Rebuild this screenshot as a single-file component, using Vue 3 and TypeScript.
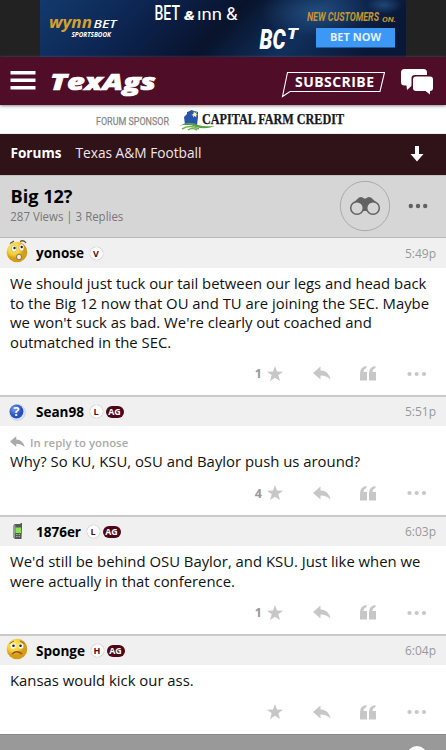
<script setup lang="ts">
interface Post {
  id: number
  name: string
  avatar: 'worried' | 'question' | 'phone' | 'sad'
  badge: string
  ag: boolean
  time: string
  replyTo?: string
  lines: string[]
  stars?: number
  nameWidth: number
}

const posts: Post[] = [
  {
    id: 1, name: 'yonose', avatar: 'worried', badge: 'V', ag: false, time: '5:49p', stars: 1, nameWidth: 49,
    lines: [
      'We should just tuck our tail between our legs and head back',
      'to the Big 12 now that OU and TU are joining the SEC. Maybe',
      "we won't suck as bad. We're clearly out coached and",
      'outmatched in the SEC.',
    ],
  },
  {
    id: 2, name: 'Sean98', avatar: 'question', badge: 'L', ag: true, time: '5:51p', stars: 4, nameWidth: 49,
    replyTo: 'yonose', lines: ['Why? So KU, KSU, oSU and Baylor push us around?'],
  },
  {
    id: 3, name: '1876er', avatar: 'phone', badge: 'L', ag: true, time: '6:03p', stars: 1, nameWidth: 46,
    lines: ["We'd still be behind OSU Baylor, and KSU. Just like when we", 'were actually in that conference.'],
  },
  {
    id: 4, name: 'Sponge', avatar: 'sad', badge: 'H', ag: true, time: '6:04p', nameWidth: 50,
    lines: ['Kansas would kick our ass.'],
  },
]
</script>

<template>
  <main class="page">
    <div class="ad">
      <svg class="banner" width="366" height="57" viewBox="40 0 366 57">
        <defs>
          <linearGradient id="navy" x1="0" x2="1" y1="0" y2=".15">
            <stop offset="0" stop-color="#123a6d" /><stop offset=".3" stop-color="#0c2450" />
            <stop offset=".56" stop-color="#09132c" /><stop offset=".78" stop-color="#10305c" /><stop offset="1" stop-color="#0a1838" />
          </linearGradient>
          <radialGradient id="glow"><stop offset="0" stop-color="#2b5c91" stop-opacity=".65" /><stop offset="1" stop-color="#2b5c91" stop-opacity="0" /></radialGradient>
        </defs>
        <rect x="40" width="366" height="57" fill="url(#navy)" />
        <ellipse cx="315" cy="12" rx="55" ry="24" fill="url(#glow)" />
        <ellipse cx="384" cy="5" rx="18" ry="9" fill="url(#glow)" />
        <g font-family="Open Sans, sans-serif" font-style="italic" font-weight="700">
          <text x="49" y="28" font-size="16.500" fill="#d6a22e" textLength="43" lengthAdjust="spacingAndGlyphs">wynn</text>
          <text x="93.500" y="28" font-size="11.500" fill="#fff" font-weight="600" textLength="23" lengthAdjust="spacingAndGlyphs">BET</text>
          <text x="71.500" y="36.500" font-size="7" fill="#fff" textLength="39.500" lengthAdjust="spacingAndGlyphs">SPORTSBOOK</text>
        </g>
        <g font-family="Roboto, sans-serif" font-style="italic" font-weight="700" fill="#c79632">
          <text x="307" y="21.300" font-size="12.500" textLength="72" lengthAdjust="spacingAndGlyphs">NEW CUSTOMERS</text>
          <text x="382" y="21.500" font-size="8" textLength="14" lengthAdjust="spacingAndGlyphs">ON.</text>
        </g>
        <g font-family="Roboto, sans-serif" fill="#fff">
          <text x="154.500" y="20" font-size="20" font-weight="500" textLength="25.500" lengthAdjust="spacingAndGlyphs">BET</text>
          <text x="184" y="20" font-size="12" font-weight="900" font-style="italic" textLength="11" lengthAdjust="spacingAndGlyphs">&amp;</text>
          <text x="197" y="20" font-size="17" textLength="25" lengthAdjust="spacingAndGlyphs">ınn</text>
          <text x="226" y="20" font-size="19" textLength="11.500" lengthAdjust="spacingAndGlyphs">&amp;</text>
        </g>
        <g font-family="Roboto, sans-serif" font-weight="900" font-style="italic" fill="#fff">
          <text x="259.500" y="48.500" font-size="27" textLength="26" lengthAdjust="spacingAndGlyphs">BC</text>
          <text x="287" y="38.800" font-size="14" textLength="11" lengthAdjust="spacingAndGlyphs">T</text>
        </g>
        <rect x="316" y="28" width="79" height="19.500" fill="#3d98f5" />
        <text x="330" y="41.300" font-family="Open Sans, sans-serif" font-size="10.800" font-weight="700" fill="#e2f0ff" textLength="51" lengthAdjust="spacingAndGlyphs">BET NOW</text>
      </svg>
    </div>

    <header class="top">
      <svg class="burger" width="26" height="20" viewBox="0 0 26 20" fill="#fff"><path d="M.5 0h25v3.500h-25zM.5 7.500h25V11h-25zM.5 15h25v3.500h-25z" /></svg>
      <svg class="logo" width="120" height="34" viewBox="0 -6 120 34">
        <text x="2" y="20" font-family="Open Sans, sans-serif" font-size="23" font-weight="800" font-style="italic" fill="#fff" stroke="#fff" stroke-width=".7" textLength="106" lengthAdjust="spacingAndGlyphs">TexAgs</text>
      </svg>
      <svg class="subscribe" width="104" height="28" viewBox="0 0 104 28">
        <path d="M6.500 2.500h97l-4.500 19H9l-7.500 5z" fill="none" stroke="#fff" stroke-width="1.100" />
        <text x="14" y="16.500" font-family="Open Sans, sans-serif" font-size="14" font-weight="700" fill="#fff" textLength="79">SUBSCRIBE</text>
      </svg>
      <svg class="chat" width="34" height="28" viewBox="0 0 34 28">
        <path d="M4.500 1h19q3.500 0 3.500 3.500V14q0 3.500-3.500 3.500H12l-5 4.500-.5-4.500h-2Q1 17.500 1 14V4.500Q1 1 4.500 1z" fill="#fff" />
        <path d="M15 7h16q3 0 3 3v11q0 3-3 3l1.500 4.500-7-4.500H15q-3.500 0-3.500-3V10q0-3 3.500-3z" fill="#500d27" />
        <path d="M16 8.500h14q3 0 3 3V20q0 3-3 3v3.500L25.500 23H16q-3 0-3-3v-8.500q0-3 3-3z" fill="#fff" />
      </svg>
    </header>

    <div class="sponsor">
      <svg width="446" height="28" viewBox="0 105 446 28">
        <text x="96" y="125" font-family="Roboto, sans-serif" font-size="11.500" fill="#858585" stroke="#858585" stroke-width=".25" textLength="73" lengthAdjust="spacingAndGlyphs">FORUM SPONSOR</text>
        <path d="m184 117 7-7 7 2v5l-1 8h-12z" fill="#2855a8" /><path d="m187 112 3-1v3h-3z" fill="#2855a8" />
        <path d="m194 111 1 2 2-1-1 2 2 1-2 .5.5 2-2-1.500-1.500 1.500.3-2-2-.5 2-1z" fill="#fff5a5" />
        <path d="M179 126q10-6 19-1 6 2 17 1-10 4-19 1-8-4-17-1z" fill="#5ba043" />
        <path d="M182 129q8-5 17 0M188 130q4-3 9 0" fill="none" stroke="#75ad52" stroke-width="1.500" />
        <text x="202" y="124.300" font-family="Liberation Serif, serif" font-size="14.500" font-weight="700" fill="#17191c" stroke="#17191c" stroke-width=".25" textLength="142" lengthAdjust="spacingAndGlyphs">CAPITAL FARM CREDIT</text>
      </svg>
    </div>

    <nav class="crumbs">
      <svg class="crumbtext" width="210" height="41" viewBox="0 0 210 41" font-family="Open Sans, sans-serif" font-size="14" fill="#fff">
        <text x="10.500" y="24" font-weight="700" textLength="51" lengthAdjust="spacingAndGlyphs">Forums</text>
        <text x="75.500" y="24" fill="#eee6e7" textLength="126" lengthAdjust="spacingAndGlyphs">Texas A&amp;M Football</text>
      </svg>
      <svg class="down" width="14" height="16" viewBox="0 0 14 16"><path d="M5 0h4v8h4.500L7 15.500.5 8H5z" fill="#fff" /></svg>
    </nav>

    <section class="topic">
      <svg class="topictext" width="200" height="60" viewBox="0 0 200 60" font-family="Open Sans, sans-serif">
        <text x="10.500" y="26.500" font-size="18" font-weight="700" textLength="62" lengthAdjust="spacingAndGlyphs">Big 12?</text>
        <text x="10.300" y="45" font-size="12" fill="#777" textLength="113" lengthAdjust="spacingAndGlyphs">287 Views | 3 Replies</text>
      </svg>
      <div class="topic-actions">
        <svg width="52" height="52" viewBox="0 0 52 52">
          <circle cx="26" cy="26" r="24.700" fill="none" stroke="#aaa" />
          <path d="M12 25 20 17.500q3-1.500 5 1h2q2-2.500 5-1L40 25 29 31h-6z" fill="#626262" />
          <circle cx="18" cy="28" r="6.300" fill="#d6d6d6" stroke="#626262" stroke-width="1.500" />
          <circle cx="34" cy="28" r="6.300" fill="#d6d6d6" stroke="#626262" stroke-width="1.500" />
        </svg>
        <svg class="more" width="20" height="6" viewBox="0 0 20 6" fill="#626262"><circle cx="2.800" cy="3" r="2.200" /><circle cx="10" cy="3" r="2.200" /><circle cx="17.200" cy="3" r="2.200" /></svg>
      </div>
    </section>

    <article v-for="post in posts" :key="post.id" :class="['post', 'post-' + post.id]">
      <header class="author">
        <div class="avatar">
          <svg width="24" height="24" viewBox="0 0 24 24">
            <defs>
              <radialGradient :id="'yellow' + post.id" cx=".35" cy=".3"><stop offset="0" stop-color="#fff28a" /><stop offset=".65" stop-color="#f4cd38" /><stop offset="1" stop-color="#d39d18" /></radialGradient>
              <radialGradient :id="'blue' + post.id" cx=".35" cy=".3"><stop offset="0" stop-color="#769ef5" /><stop offset="1" stop-color="#2450c4" /></radialGradient>
            </defs>
            <g v-if="post.avatar === 'worried'">
              <circle cx="12" cy="13" r="10.300" :fill="`url(#yellow${post.id})`" />
              <ellipse cx="9" cy="9.500" rx="2.600" ry="3.600" fill="#fffbed" stroke="#a9934b" stroke-width=".5" /><ellipse cx="16.500" cy="8.500" rx="2.600" ry="3.600" fill="#fffbed" stroke="#a9934b" stroke-width=".5" />
              <circle cx="9.500" cy="9" r="1.200" fill="#272018" /><circle cx="16.700" cy="8" r="1.200" fill="#272018" />
              <ellipse cx="14" cy="18" rx="2.500" ry="2.800" fill="#eee" stroke="#8b7445" />
              <path d="m5 4.500 4-2.500M15 2.500q4-2 6 1.500" fill="none" stroke="#695325" stroke-width="1.300" />
            </g>
            <g v-else-if="post.avatar === 'question'">
              <circle cx="12.500" cy="12.500" r="8" fill="#dce1ec" stroke="#bbc2d2" stroke-width=".5" /><circle cx="11.500" cy="11.500" r="6.900" :fill="`url(#blue${post.id})`" />
              <text x="11.600" y="16" text-anchor="middle" font-family="Open Sans, sans-serif" font-weight="700" font-size="12.500" fill="#fff">?</text>
            </g>
            <g v-else-if="post.avatar === 'phone'">
              <path d="M15.500 3h1.500v4h-1.500zM8.500 6q0-2 2-2h5l1.500 2-.5 13H10l-2-2z" fill="#535955" /><path d="M8 6v11l2 1 .5-13z" fill="#989b96" />
              <path d="M10.500 7.500H16v5.500h-5.500z" fill="#83e652" /><path d="M11 14.500h4M11 16.500h4" stroke="#a7aaa8" stroke-dasharray="1 .5" />
            </g>
            <g v-else>
              <circle cx="12" cy="12" r="10.300" :fill="`url(#yellow${post.id})`" />
              <ellipse cx="8" cy="9" rx="2.500" ry="2.700" fill="#fffbea" /><ellipse cx="16" cy="9" rx="2.500" ry="2.700" fill="#fffbea" />
              <circle cx="8.500" cy="8.800" r="1.300" fill="#292424" /><circle cx="15.500" cy="8.800" r="1.300" fill="#292424" />
              <path d="M4.500 6.500 9 4M15 4l4.500 2.500" stroke="#8b6926" /><path d="M7 17q5-4.500 10 0" fill="none" stroke="#9c472b" stroke-width="1.300" />
            </g>
          </svg>
        </div>
        <svg class="name" :width="post.nameWidth" height="22"><text x="0" y="15.500" font-family="Open Sans, sans-serif" font-size="14" font-weight="700" :textLength="post.nameWidth - 1" lengthAdjust="spacingAndGlyphs">{{ post.name }}</text></svg>
        <span class="letter">{{ post.badge }}</span><span v-if="post.ag" class="ag">AG</span>
        <time>{{ post.time }}</time>
      </header>
      <div class="body">
        <div v-if="post.replyTo" class="reply-to"><svg width="15" height="12" viewBox="0 0 18 14"><path d="M7.500 0v4q8 0 10 9-4-4-10-4v4L0 6.500z" fill="#aaa" /></svg>In reply to {{ post.replyTo }}</div>
        <p><span v-for="line in post.lines" :key="line">{{ line }}</span></p>
        <footer class="actions">
          <span class="count">{{ post.stars }}</span>
          <svg class="star" width="16" height="16" viewBox="0 0 16 16"><path d="m8 0 2 5.500 6 .2-4.700 3.600L13 15l-5-3.300L3 15l1.700-5.700L0 5.700l6-.2z" fill="#c7c7c7" /></svg>
          <svg class="reply" width="18" height="15" viewBox="0 0 18 14"><path d="M7.500 0v4q8 0 10 9-4-4-10-4v4L0 6.500z" fill="#c7c7c7" /></svg>
          <svg class="quote" width="17" height="15" viewBox="0 0 17 15"><path d="M6.500 0v2Q3.500 3 3.500 6H7v8.500H0V7Q0 1 6.500 0zM15.500 0v2q-3 1-3 4H16v8.500H9V7q0-6 6.500-7z" fill="#c7c7c7" /></svg>
          <svg class="dots" width="20" height="6" viewBox="0 0 20 6" fill="#c7c7c7"><circle cx="2.500" cy="3" r="2.100" /><circle cx="9.700" cy="3" r="2.100" /><circle cx="17" cy="3" r="2.100" /></svg>
        </footer>
      </div>
    </article>
    <div class="bottom"><i></i></div>
  </main>
</template>

<style>
body { background: #fff; }
</style>
<style scoped>
* { box-sizing: border-box; }
svg { display: block; flex: none; }
.page { width: 446px; height: 750px; overflow: hidden; font-family: "Open Sans", sans-serif; color: #111; background: #fff; }
.ad { height: 57px; background: #222; display: flex; justify-content: center; }
.top { height: 48px; background: #500d27; display: flex; align-items: flex-start; padding: 14px 12px 0 10px; box-shadow: 0 1px 3px #888; position: relative; }
.logo { margin: -7px 0 0 12px; }
.subscribe { margin-left: auto; margin-top: -1px; }
.chat { margin: -3px 0 0 15px; }
.sponsor { height: 29px; border-bottom: 1px solid #eee; }
.crumbs { height: 41px; background: #301219; display: flex; justify-content: space-between; }
.down { margin: 12px 22px 0 0; }
.topic { height: 62px; background: #d6d6d6; display: flex; justify-content: space-between; border-top: 1px solid #c2c2c2; }
.topic-actions { display: flex; align-items: center; gap: 17px; padding-right: 18px; height: 60px; }
.post { border-top: 2px solid #cacaca; display: flex; flex-direction: column; }
.post-1 { height: 158px; border-top: 1px solid #b8b8b8; }
.post-2 { height: 120px; }
.post-3 { height: 119px; }
.post-4 { height: 100px; }
.author { height: 29px; background: #f0f0f0; display: flex; align-items: center; padding: 0 10px 0 5px; flex: none; }
.post-1 .author { height: 30px; }
.avatar { width: 30.500px; }
.post-1 .avatar { margin-top: -5px; }
.post-4 .avatar { margin-top: -3px; }
.letter { width: 13px; height: 13px; line-height: 13px; border-radius: 50%; text-align: center; background: #fff; box-shadow: 0 0 1px #888; color: #500d1c; font-size: 9px; font-weight: 700; margin-left: 5px; }
.ag { width: 18px; height: 12px; line-height: 12px; border-radius: 6px; background: #4d0718; color: #fff; font-size: 8.800px; font-weight: 700; text-align: center; margin-left: 3px; }
time { margin-left: auto; font-size: 12px; color: #999; position: relative; }
.body { flex: 1; min-height: 0; padding: 6px 18px 0 10px; display: flex; flex-direction: column; }
.reply-to { display: flex; align-items: center; gap: 5px; font-size: 11.400px; font-weight: 600; color: #aaa; height: 21px; }
p { margin: 0; font-size: 14.870px; line-height: 19.500px; white-space: nowrap; }
p span { display: block; }
.actions { margin-top: auto; height: 45px; display: flex; align-items: center; justify-content: flex-end; }
.post-1 .actions { height: 47px; }
.count { font-size: 12.500px; font-weight: 700; color: #999; margin-right: 5px; }
.star { margin-right: 0; }
.reply { margin-left: 30px; }
.quote { margin-left: 29px; }
.dots { margin: 0 1px 0 30px; }
.bottom { height: 16px; background: #999; border-top: 1px solid #888; display: flex; justify-content: flex-end; overflow: hidden; }
.bottom i { width: 20px; height: 20px; border-radius: 50%; background: #fff; margin: 11px 19px 0 0; flex: none; }
</style>
